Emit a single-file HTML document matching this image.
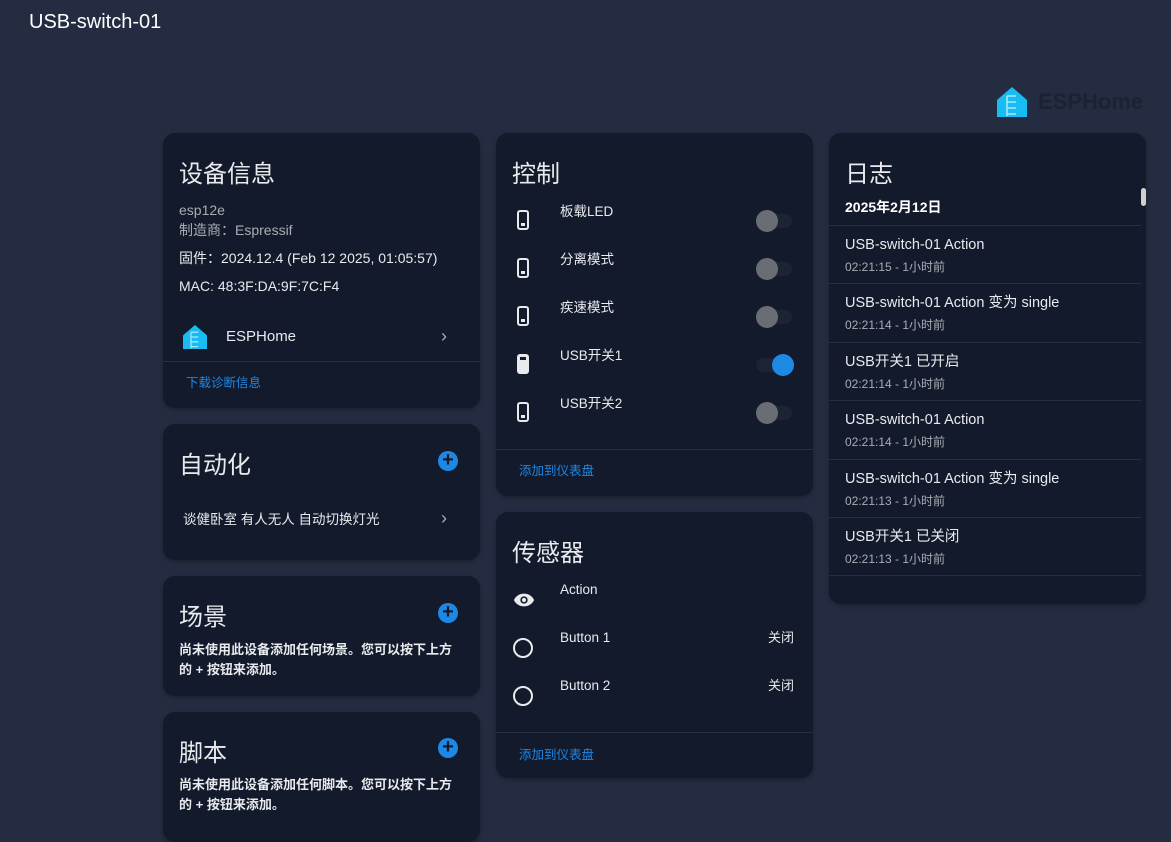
<!DOCTYPE html>
<html><head><meta charset="utf-8"><style>
*{box-sizing:border-box;margin:0;padding:0}
body{width:1171px;height:820px;overflow:hidden;background:#232c41;font-family:"Liberation Sans","Noto Sans CJK SC",sans-serif;color:#e8eaed;position:relative}
.a{position:absolute;white-space:nowrap;line-height:1.2}
.card{position:absolute;background:#131a2c;border-radius:12px;box-shadow:0 2px 4px rgba(0,0,0,.25)}
.h{font-size:24px;color:#e8eaed;left:16px;top:28px}
.s{font-size:14px}
.blue{color:#1e88e5;font-size:12.5px}
.div{position:absolute;left:0;right:0;height:1px;background:#243042}
.tog{position:absolute;width:36px;height:14px;border-radius:7px;background:#1c2335}
.tog i{position:absolute;top:-4px;width:22px;height:22px;border-radius:50%;background:#6a6d73}
.plus{position:absolute;width:20px;height:20px;border-radius:50%;background:#1e88e5;color:#131a2c;font-size:20px;line-height:19px;text-align:center;font-weight:bold}
.ph{position:absolute;width:12px;height:20px;border:2px solid #e8eaed;border-radius:3px}
.ph:after{content:"";position:absolute;left:2px;right:2px;bottom:2px;height:3px;background:#e8eaed}
.circ{position:absolute;width:20px;height:20px;border:2px solid #e8eaed;border-radius:50%}
.lt{font-size:14.5px;left:16px}
.ls{font-size:12px;color:#a9adb3;left:16px}
</style></head><body>
<div class="a" style="left:29px;top:10px;font-size:20px;color:#fff">USB-switch-01</div>
<svg class="a" style="left:997px;top:87px" width="30" height="30" viewBox="0 0 30 30"><path d="M15 0 L30 13 V30 H0 V13Z" fill="#18bcf2"/><path d="M10 9 H19 M10 9 V29 M10 15 H19 M10 21 H19 M10 27 H19" stroke="#a7e6fa" stroke-width="1.6" fill="none"/></svg>
<div class="a" style="left:1038px;top:89px;font-size:22px;color:#1b2233;font-weight:bold">ESPHome</div>

<div class="card" style="left:163px;top:133px;width:317px;height:275px">
<div class="a h">设备信息</div>
<div class="a s" style="left:16px;top:69px;color:#a9adb3">esp12e</div>
<div class="a s" style="left:16px;top:89px;color:#a9adb3">制造商：Espressif</div>
<div class="a s" style="left:16px;top:117px">固件：2024.12.4 (Feb 12 2025, 01:05:57)</div>
<div class="a s" style="left:16px;top:145px">MAC: 48:3F:DA:9F:7C:F4</div>
<svg class="a" style="left:20px;top:192px" width="24" height="24" viewBox="0 0 30 30"><path d="M15 0 L30 13 V30 H0 V13Z" fill="#18bcf2"/><path d="M10 9 H19 M10 9 V29 M10 15 H19 M10 21 H19 M10 27 H19" stroke="#a7e6fa" stroke-width="1.6" fill="none"/></svg>
<div class="a s" style="left:63px;top:195px;font-size:15px">ESPHome</div>
<div class="a" style="left:278px;top:193px;font-size:18px;color:#a9adb3">›</div>
<div class="div" style="top:228px"></div>
<div class="a blue" style="left:23px;top:243px">下载诊断信息</div>
</div>

<div class="card" style="left:163px;top:424px;width:317px;height:136px">
<div class="a h">自动化</div>
<div class="plus" style="left:275px;top:27px">+</div>
<div class="a s" style="left:20px;top:88px;font-size:13.5px">谈健卧室 有人无人 自动切换灯光</div>
<div class="a" style="left:278px;top:84px;font-size:18px;color:#a9adb3">›</div>
</div>

<div class="card" style="left:163px;top:576px;width:317px;height:120px">
<div class="a h">场景</div>
<div class="plus" style="left:275px;top:27px">+</div>
<div class="a" style="left:16px;top:64px;font-size:13px;line-height:20px;white-space:normal;width:279px;font-weight:bold">尚未使用此设备添加任何场景。您可以按下上方的 + 按钮来添加。</div>
</div>

<div class="card" style="left:163px;top:712px;width:317px;height:130px">
<div class="a h">脚本</div>
<div class="plus" style="left:275px;top:26px">+</div>
<div class="a" style="left:16px;top:63px;font-size:13px;line-height:20px;white-space:normal;width:279px;font-weight:bold">尚未使用此设备添加任何脚本。您可以按下上方的 + 按钮来添加。</div>
</div>

<div class="card" style="left:496px;top:133px;width:317px;height:363px">
<div class="a h">控制</div>
<div class="ph" style="left:21px;top:77px"></div><div class="a s" style="left:64px;top:71px;font-size:13.5px">板载LED</div><div class="tog" style="left:260px;top:81px"><i style="left:0"></i></div>
<div class="ph" style="left:21px;top:125px"></div><div class="a s" style="left:64px;top:119px;font-size:13.5px">分离模式</div><div class="tog" style="left:260px;top:129px"><i style="left:0"></i></div>
<div class="ph" style="left:21px;top:173px"></div><div class="a s" style="left:64px;top:167px;font-size:13.5px">疾速模式</div><div class="tog" style="left:260px;top:177px"><i style="left:0"></i></div>
<div class="a" style="left:21px;top:221px;width:12px;height:20px;background:#e8eaed;border-radius:3px"><div style="position:absolute;left:3px;top:3px;width:6px;height:3px;background:#131a2c"></div></div><div class="a s" style="left:64px;top:215px;font-size:13.5px">USB开关1</div><div class="tog" style="left:260px;top:225px"><i style="left:16px;background:#1e88e5"></i></div>
<div class="ph" style="left:21px;top:269px"></div><div class="a s" style="left:64px;top:263px;font-size:13.5px">USB开关2</div><div class="tog" style="left:260px;top:273px"><i style="left:0"></i></div>
<div class="div" style="top:316px"></div>
<div class="a blue" style="left:23px;top:331px">添加到仪表盘</div>
</div>

<div class="card" style="left:496px;top:512px;width:317px;height:266px">
<div class="a h">传感器</div>
<svg class="a" style="left:17px;top:80px" width="22" height="16" viewBox="0 0 24 16"><path d="M12 1C6.5 1 2.5 4.5 1 8c1.5 3.5 5.5 7 11 7s9.5-3.5 11-7c-1.5-3.5-5.5-7-11-7z" fill="#e8eaed"/><circle cx="12" cy="8" r="4" fill="#131a2c"/><circle cx="12" cy="8" r="2.3" fill="#e8eaed"/></svg>
<div class="a s" style="left:64px;top:70px;font-size:13.5px">Action</div>
<div class="circ" style="left:17px;top:126px"></div><div class="a s" style="left:64px;top:118px;font-size:13.5px">Button 1</div><div class="a s" style="left:272px;top:118px;font-size:13px">关闭</div>
<div class="circ" style="left:17px;top:174px"></div><div class="a s" style="left:64px;top:166px;font-size:13.5px">Button 2</div><div class="a s" style="left:272px;top:166px;font-size:13px">关闭</div>
<div class="div" style="top:220px"></div>
<div class="a blue" style="left:23px;top:236px">添加到仪表盘</div>
</div>

<div class="card" style="left:829px;top:133px;width:317px;height:471px">
<div class="a h">日志</div>
<div class="a" style="left:312px;top:55px;width:5px;height:18px;border-radius:3px;background:#d0d0d0"></div>
<div class="a" style="left:16px;top:66px;font-size:14px;font-weight:bold;color:#fff">2025年2月12日</div>
<div class="div" style="top:92px;right:5px"></div>
<div class="a lt" style="top:104px">USB-switch-01 Action</div><div class="a ls" style="top:127px">02:21:15 - 1小时前</div>
<div class="div" style="top:150px;right:5px"></div>
<div class="a lt" style="top:162px">USB-switch-01 Action 变为 single</div><div class="a ls" style="top:185px">02:21:14 - 1小时前</div>
<div class="div" style="top:209px;right:5px"></div>
<div class="a lt" style="top:221px">USB开关1 已开启</div><div class="a ls" style="top:244px">02:21:14 - 1小时前</div>
<div class="div" style="top:267px;right:5px"></div>
<div class="a lt" style="top:279px">USB-switch-01 Action</div><div class="a ls" style="top:302px">02:21:14 - 1小时前</div>
<div class="div" style="top:326px;right:5px"></div>
<div class="a lt" style="top:338px">USB-switch-01 Action 变为 single</div><div class="a ls" style="top:361px">02:21:13 - 1小时前</div>
<div class="div" style="top:384px;right:5px"></div>
<div class="a lt" style="top:396px">USB开关1 已关闭</div><div class="a ls" style="top:419px">02:21:13 - 1小时前</div>
<div class="div" style="top:442px;right:5px"></div>
</div>
</body></html>
